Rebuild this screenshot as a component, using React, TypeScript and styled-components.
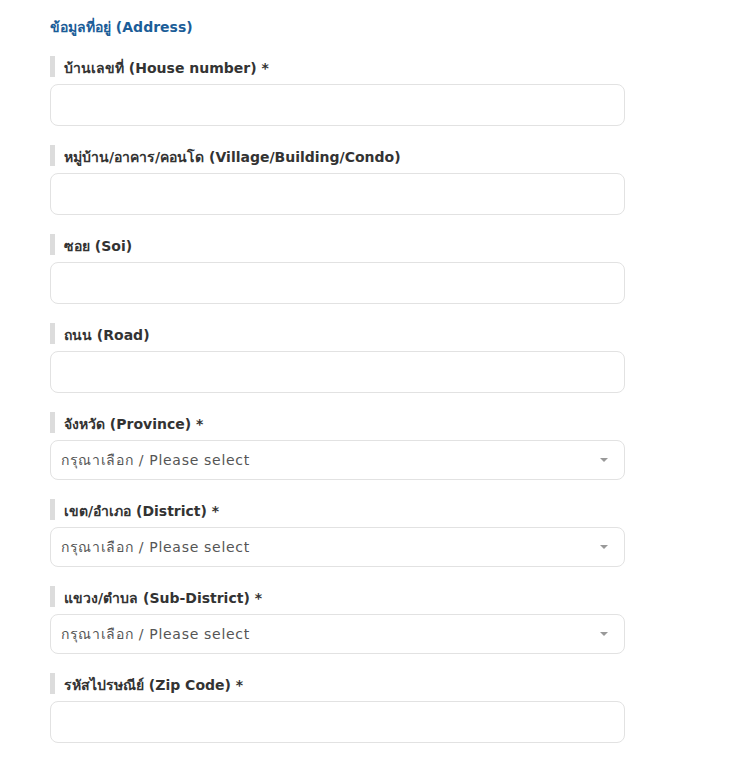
import styled, { createGlobalStyle } from "styled-components";

const GlobalStyle = createGlobalStyle`
  body {
    margin: 0;
    background: #ffffff;
    font-family: Tahoma, "DejaVu Sans", "Noto Sans", sans-serif;
  }
`

type Field = {
  label: string
  required?: boolean
  kind: "text" | "select"
}

const fields: Field[] = [
  { label: "บ้านเลขที่ (House number)", required: true, kind: "text" },
  { label: "หมู่บ้าน/อาคาร/คอนโด (Village/Building/Condo)", kind: "text" },
  { label: "ซอย (Soi)", kind: "text" },
  { label: "ถนน (Road)", kind: "text" },
  { label: "จังหวัด (Province)", required: true, kind: "select" },
  { label: "เขต/อำเภอ (District)", required: true, kind: "select" },
  { label: "แขวง/ตำบล (Sub-District)", required: true, kind: "select" },
  { label: "รหัสไปรษณีย์ (Zip Code)", required: true, kind: "text" },
]

function App() {
  return (
    <>
      <GlobalStyle />
      <Page>
        <Title>ข้อมูลที่อยู่ (Address)</Title>
        {fields.map((f) => (
          <FieldGroup key={f.label}>
            <Label>
              {f.label}
              {f.required && " *"}
            </Label>
            {f.kind === "text" ? (
              <TextInput type="text" />
            ) : (
              <SelectBox>
                <Placeholder>กรุณาเลือก / Please select</Placeholder>
                <Caret />
              </SelectBox>
            )}
          </FieldGroup>
        ))}
      </Page>
    </>
  )
}

const Page = styled.div`
  width: 575px;
  padding: 17px 0 15px 50px;
  display: flex;
  flex-direction: column;
`

const Title = styled.div`
  font-size: 14px;
  font-weight: 700;
  line-height: 20px;
  color: #1b5d98;
  margin-bottom: 19px;
`

const FieldGroup = styled.div`
  display: flex;
  flex-direction: column;
  gap: 7px;
  & + & {
    margin-top: 19px;
  }
`

const Label = styled.div`
  border-left: 5px solid #dcdcdc;
  padding: 3px 0 0 9px;
  font-size: 14px;
  font-weight: 700;
  line-height: 18px;
  color: #333333;
`

const TextInput = styled.input`
  box-sizing: border-box;
  width: 100%;
  height: 42px;
  border: 1px solid #e2e2e2;
  border-radius: 8px;
  padding: 0 10px;
  font-size: 14px;
  outline: none;
  background: #fff;
`

const SelectBox = styled.div`
  box-sizing: border-box;
  width: 100%;
  height: 40px;
  border: 1px solid #e2e2e2;
  border-radius: 8px;
  padding: 0 16px 0 10px;
  display: flex;
  align-items: center;
  justify-content: space-between;
  background: #fff;
`

const Placeholder = styled.span`
  font-size: 14px;
  letter-spacing: 0.7px;
  color: #555555;
`

const Caret = styled.span`
  width: 0;
  height: 0;
  border-left: 4px solid transparent;
  border-right: 4px solid transparent;
  border-top: 4px solid #999999;
`

export default App;
